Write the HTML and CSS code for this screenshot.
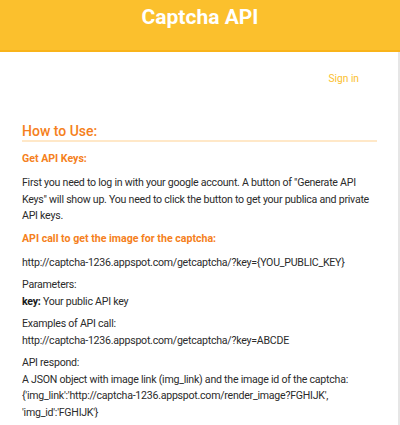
FILE: index.html
```html
<!DOCTYPE html>
<html>
<head>
<meta charset="utf-8">
<link rel="stylesheet" href="styles.css">
</head>
<body>
<header class="topbar"><h1 class="title">Captcha API</h1></header>
<main class="page">
  <nav class="nav"><a class="signin" href="#">Sign in</a></nav>
  <section class="doc">
    <h2 class="doc-title">How to Use:</h2>
    <h3 class="sub first">Get API Keys:</h3>
    <p class="para">First you need to log in with your google account. A button of "Generate API Keys" will show up. You need to click the button to get your publica and private API keys.</p>
    <h3 class="sub">API call to get the image for the captcha:</h3>
    <p class="para">http://captcha-1236.appspot.com/getcaptcha/?key={YOU_PUBLIC_KEY}</p>
    <p class="para">Parameters:<br><b>key:</b> Your public API key</p>
    <p class="para">Examples of API call:<br>http://captcha-1236.appspot.com/getcaptcha/?key=ABCDE</p>
    <p class="para">API respond:<br>A JSON object with image link (img_link) and the image id of the captcha: {'img_link':'http://captcha-1236.appspot.com/render_image?FGHIJK', 'img_id':'FGHIJK'}</p>
  </section>
</main>
</body>
</html>
```
FILE: styles.css
```css
* { box-sizing: border-box; }
html, body { margin: 0; padding: 0; }
body {
  font-family: Roboto, "Liberation Sans", sans-serif;
  background: #fff;
  color: #2b2b2b;
}
.topbar {
  background: #FBC02D;
  height: 52px;
  border-bottom: 2px solid #F9B41A;
  display: flex;
  justify-content: center;
  align-items: flex-start;
}
.title {
  margin: 0;
  padding-top: 4px;
  color: #fff;
  font-size: 21px;
  font-weight: 700;
  line-height: 26px;
}
.page {
  border-right: 2px solid #e6e6e6;
  min-height: 373px;
  padding: 0 21px 0 22px;
}
.nav {
  display: flex;
  justify-content: flex-end;
  padding: 20px 18px 0 0;
  height: 70px;
}
.signin {
  color: #FBC02D;
  font-size: 10.2px;
  text-decoration: none;
  line-height: 14px;
}
.doc-title {
  margin: 0;
  color: #F57F20;
  font-size: 14px;
  font-weight: 500;
  line-height: 18px;
  border-bottom: 2px solid #FFE8C8;
}
.sub {
  margin: 7px 0 9px;
  color: #F57F20;
  font-size: 10.6px;
  font-weight: 700;
  line-height: 14px;
}
.sub.first { margin-top: 10px; }
.para {
  margin: 0 0 6px;
  font-size: 10.6px;
  letter-spacing: -0.25px;
  line-height: 16.5px;
}
.para b { font-weight: 700; color: #1a1a1a; }
```
